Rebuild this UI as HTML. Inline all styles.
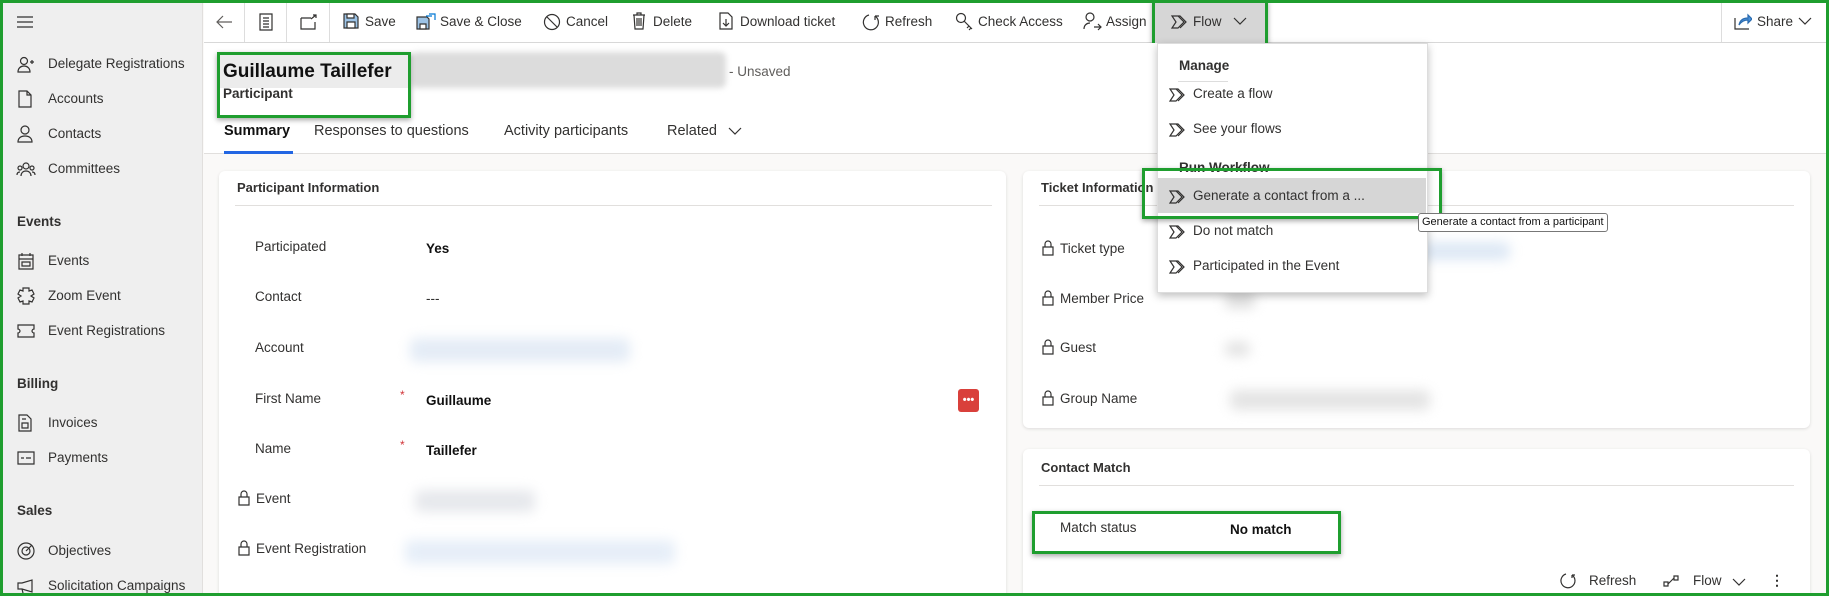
<!DOCTYPE html>
<html><head><meta charset="utf-8">
<style>
*{margin:0;padding:0;box-sizing:border-box}
html,body{width:1829px;height:596px;overflow:hidden}
body{position:relative;background:#faf9f8;font-family:"Liberation Sans",sans-serif;color:#323130;font-size:14px}
.a{position:absolute;white-space:nowrap;line-height:20px}
.c{font-size:13.5px}
svg.i{position:absolute;fill:none;stroke:#323130;stroke-width:1.2}
.gb{position:absolute;border:3px solid #1f9e2f;box-shadow:0 2px 5px rgba(0,0,0,.35)}
.blur{position:absolute;filter:blur(6px);border-radius:6px}
</style></head><body>
<!-- sidebar -->
<div style="position:absolute;left:0;top:0;width:203px;height:596px;background:#efefef;border-right:1px solid #e1dfdd"></div>
<svg class="i" style="left:16px;top:15px" width="18" height="14"><path d="M1 2h16M1 7h16M1 12h16"/></svg>
<svg class="i" style="left:17px;top:56px" width="18" height="18"><circle cx="7" cy="5" r="3.5"/><path d="M1 16c0-4 3-6 6-6s6 2 6 6zM13 6h4M15 4v4"/></svg>
<div class="a c" style="left:48px;top:54px">Delegate Registrations</div>
<svg class="i" style="left:18px;top:90px" width="14" height="18"><path d="M1 1h8l4 4v12H1zM9 1v4h4"/></svg>
<div class="a c" style="left:48px;top:89px">Accounts</div>
<svg class="i" style="left:17px;top:125px" width="16" height="18"><circle cx="8" cy="5" r="4"/><path d="M1 17c0-4 3-6 7-6s7 2 7 6z"/></svg>
<div class="a c" style="left:48px;top:124px">Contacts</div>
<svg class="i" style="left:16px;top:161px" width="20" height="16"><circle cx="10" cy="5" r="3"/><circle cx="4" cy="7" r="2"/><circle cx="16" cy="7" r="2"/><path d="M5 15c0-3 2-5 5-5s5 2 5 5M1 14c0-2 1-3 3-3M19 14c0-2-1-3-3-3"/></svg>
<div class="a c" style="left:48px;top:159px">Committees</div>
<div class="a c" style="left:17px;top:212px;font-weight:bold">Events</div>
<svg class="i" style="left:18px;top:252px" width="16" height="18"><path d="M1 3h14v14H1zM1 7h14M4 1v3M12 1v3M4 10h8v4H4z"/></svg>
<div class="a c" style="left:48px;top:251px">Events</div>
<svg class="i" style="left:17px;top:287px" width="18" height="18"><path d="M6 1h6v3l3-1 2 4-3 2 3 2-2 4-3-1v3H6v-3l-3 1-2-4 3-2-3-2 2-4 3 1z"/></svg>
<div class="a c" style="left:48px;top:286px">Zoom Event</div>
<svg class="i" style="left:17px;top:324px" width="18" height="14"><path d="M1 1h16v4c-1 0-2 1-2 2s1 2 2 2v4H1V9c1 0 2-1 2-2S2 5 1 5z"/></svg>
<div class="a c" style="left:48px;top:321px">Event Registrations</div>
<div class="a c" style="left:17px;top:374px;font-weight:bold">Billing</div>
<svg class="i" style="left:18px;top:414px" width="14" height="18"><path d="M1 1h8l4 4v12H1zM4 9h6v5H4zM4 5h4"/></svg>
<div class="a c" style="left:48px;top:413px">Invoices</div>
<svg class="i" style="left:17px;top:451px" width="18" height="14"><path d="M1 1h16v12H1zM4 7h3M9 7h5"/></svg>
<div class="a c" style="left:48px;top:448px">Payments</div>
<div class="a c" style="left:17px;top:501px;font-weight:bold">Sales</div>
<svg class="i" style="left:17px;top:542px" width="18" height="18"><circle cx="9" cy="9" r="8"/><circle cx="9" cy="9" r="4"/><path d="M9 9l6-6"/></svg>
<div class="a c" style="left:48px;top:541px">Objectives</div>
<svg class="i" style="left:17px;top:579px" width="18" height="14"><path d="M1 4h4l10-3v12L5 10H1zM5 10l1 4"/></svg>
<div class="a c" style="left:48px;top:576px">Solicitation Campaigns</div>

<!-- command bar -->
<div style="position:absolute;left:204px;top:0;width:1625px;height:43px;background:#fff;border-bottom:1px solid #d8d8d8"></div>
<div style="position:absolute;left:244px;top:3px;width:1px;height:39px;background:#ddd"></div>
<div style="position:absolute;left:286px;top:3px;width:1px;height:39px;background:#ddd"></div>
<div style="position:absolute;left:329px;top:3px;width:1px;height:39px;background:#ddd"></div>
<div style="position:absolute;left:1721px;top:3px;width:1px;height:39px;background:#ddd"></div>
<svg class="i" style="left:215px;top:14px;stroke:#605e5c" width="18" height="16"><path d="M17 8H2M8 2L2 8l6 6"/></svg>
<svg class="i" style="left:259px;top:13px" width="14" height="18"><path d="M1 1h12v16H1zM4 5h6M4 8h6M4 11h6M4 14h6"/></svg>
<svg class="i" style="left:300px;top:14px" width="18" height="16"><path d="M1 4h10M1 4v11h14V8M11 5l5-4M13 1h3v3"/></svg>
<svg class="i" style="left:343px;top:13px" width="16" height="16"><path d="M1 1h11l3 3v11H1z" fill="#9dc3e6"/><path d="M4 9h8v6H4zM4 1h7v4H4z" fill="#fff"/></svg>
<div class="a c" style="left:365px;top:12px">Save</div>
<svg class="i" style="left:416px;top:12px" width="20" height="18"><path d="M1 5h10l2 2v10H1z" fill="#9dc3e6"/><path d="M4 12h6v5H4z" fill="#fff"/><path d="M13 2h6v6M10 4h6" stroke="#0078d4"/></svg>
<div class="a c" style="left:440px;top:12px">Save &amp; Close</div>
<svg class="i" style="left:543px;top:13px" width="18" height="18"><circle cx="9" cy="9" r="7.5"/><path d="M4 4l10 10"/></svg>
<div class="a c" style="left:566px;top:12px">Cancel</div>
<svg class="i" style="left:632px;top:12px" width="14" height="18"><path d="M1 3h12M5 3V1h4v2M2 3l1 14h8l1-14M5 6v8M7 6v8M9 6v8"/></svg>
<div class="a c" style="left:653px;top:12px">Delete</div>
<svg class="i" style="left:719px;top:12px" width="14" height="18"><path d="M1 1h8l4 4v12H1zM7 7v6M4 11l3 3 3-3"/></svg>
<div class="a c" style="left:740px;top:12px">Download ticket</div>
<svg class="i" style="left:862px;top:13px" width="18" height="18"><path d="M7 2A7.5 7.5 0 1 0 13 3M13 3V7M13 3h4"/></svg>
<div class="a c" style="left:885px;top:12px">Refresh</div>
<svg class="i" style="left:955px;top:12px" width="20" height="20"><circle cx="6" cy="6" r="4.5"/><path d="M9 9l8 8M14 14l-2 2M16 16l-2 2"/></svg>
<div class="a c" style="left:978px;top:12px">Check Access</div>
<svg class="i" style="left:1083px;top:12px" width="20" height="20"><circle cx="7" cy="5" r="4"/><path d="M1 17c0-4 3-6 6-6M11 15h7M15 12l3 3-3 3"/></svg>
<div class="a c" style="left:1106px;top:12px">Assign</div>
<div style="position:absolute;left:1155px;top:3px;width:111px;height:42px;background:#d6d6d6"></div>
<svg class="i" style="left:1169px;top:14px" width="18" height="16"><path d="M3 2h6l6 6-6 6H3l4-6zM9 2h2l6 6-6 6"/></svg>
<div class="a c" style="left:1193px;top:12px">Flow</div>
<svg class="i" style="left:1233px;top:16px" width="14" height="10"><path d="M1 2l6 6 6-6"/></svg>
<div class="gb" style="left:1152px;top:0;width:116px;height:47px"></div>
<svg class="i" style="left:1734px;top:12px" width="18" height="18"><path d="M1 6v11h14"/><path d="M5 13c1-5 4-7 9-7V3l4 4-4 4V8c-4 0-7 2-9 5z" fill="#4a90d9" stroke="#2b6cb0"/></svg>
<div class="a c" style="left:1757px;top:12px">Share</div>
<svg class="i" style="left:1798px;top:16px" width="14" height="10"><path d="M1 2l6 6 6-6"/></svg>

<!-- header -->
<div style="position:absolute;left:204px;top:43px;width:1625px;height:111px;background:#fff;border-bottom:1px solid #e1dfdd"></div>
<div class="blur" style="left:411px;top:52px;width:315px;height:36px;background:#dcdcdc;filter:blur(3px)"></div>
<div style="position:absolute;left:217px;top:52px;width:194px;height:36px;background:#ececec"></div>
<div class="a" style="left:223px;top:58px;font-size:19px;line-height:28px;font-weight:bold;color:#111">Guillaume Taillefer</div>
<div class="a c" style="left:223px;top:84px;font-weight:bold">Participant</div>
<div class="gb" style="left:217px;top:52px;width:194px;height:66px"></div>
<div class="a c" style="left:729px;top:62px;color:#605e5c">- Unsaved</div>
<div class="a" style="left:224px;top:121px;font-size:14.5px;font-weight:bold;color:#111">Summary</div>
<div style="position:absolute;left:224px;top:151px;width:69px;height:3px;background:#2266e3"></div>
<div class="a" style="left:314px;top:121px;font-size:14.5px">Responses to questions</div>
<div class="a" style="left:504px;top:121px;font-size:14.5px">Activity participants</div>
<div class="a" style="left:667px;top:121px;font-size:14.5px">Related</div>
<svg class="i" style="left:728px;top:126px" width="14" height="10"><path d="M1 2l6 6 6-6"/></svg>

<!-- left card -->
<div style="position:absolute;left:219px;top:171px;width:787px;height:440px;background:#fff;border-radius:6px;box-shadow:0 1px 3px rgba(0,0,0,.12)"></div>
<div class="a" style="left:237px;top:178px;font-weight:bold;font-size:13px">Participant Information</div>
<div style="position:absolute;left:235px;top:205px;width:757px;height:1px;background:#e1dfdd"></div>
<div class="a c" style="left:255px;top:237px">Participated</div><div class="a c" style="left:426px;top:239px;font-weight:bold;color:#111">Yes</div>
<div class="a c" style="left:255px;top:287px">Contact</div><div class="a c" style="left:426px;top:289px">---</div>
<div class="a c" style="left:255px;top:338px">Account</div>
<div class="blur" style="left:410px;top:338px;width:220px;height:24px;background:#e4ecf6"></div>
<div class="a c" style="left:255px;top:389px">First Name</div><div class="a" style="left:400px;top:385px;color:#d13438;font-size:12px">*</div><div class="a c" style="left:426px;top:391px;font-weight:bold;color:#111">Guillaume</div>
<div style="position:absolute;left:958px;top:389px;width:21px;height:23px;background:#d9403b;border-radius:3px;color:#fff;font-size:11px;line-height:22px;text-align:center;font-weight:bold">•••</div>
<div class="a c" style="left:255px;top:439px">Name</div><div class="a" style="left:400px;top:435px;color:#d13438;font-size:12px">*</div><div class="a c" style="left:426px;top:441px;font-weight:bold;color:#111">Taillefer</div>
<svg class="i" style="left:238px;top:490px" width="12" height="16"><path d="M3 7V4a3 3 0 0 1 6 0v3M1 7h10v8H1z"/></svg>
<div class="a c" style="left:256px;top:489px">Event</div>
<div class="blur" style="left:415px;top:490px;width:120px;height:22px;background:#e6e8ec"></div>
<svg class="i" style="left:238px;top:540px" width="12" height="16"><path d="M3 7V4a3 3 0 0 1 6 0v3M1 7h10v8H1z"/></svg>
<div class="a c" style="left:256px;top:539px">Event Registration</div>
<div class="blur" style="left:405px;top:540px;width:270px;height:24px;background:#e6eef8"></div>

<!-- right card -->
<div style="position:absolute;left:1023px;top:171px;width:787px;height:257px;background:#fff;border-radius:6px;box-shadow:0 1px 3px rgba(0,0,0,.12)"></div>
<div class="a" style="left:1041px;top:178px;font-weight:bold;font-size:13px">Ticket Information</div>
<div style="position:absolute;left:1039px;top:205px;width:755px;height:1px;background:#e1dfdd"></div>
<svg class="i" style="left:1042px;top:240px" width="12" height="16"><path d="M3 7V4a3 3 0 0 1 6 0v3M1 7h10v8H1z"/></svg>
<div class="a c" style="left:1060px;top:239px">Ticket type</div>
<div class="blur" style="left:1420px;top:242px;width:90px;height:18px;background:#dde8f5"></div>
<svg class="i" style="left:1042px;top:290px" width="12" height="16"><path d="M3 7V4a3 3 0 0 1 6 0v3M1 7h10v8H1z"/></svg>
<div class="a c" style="left:1060px;top:289px">Member Price</div>
<div class="blur" style="left:1225px;top:292px;width:30px;height:16px;background:#ddd"></div>
<svg class="i" style="left:1042px;top:339px" width="12" height="16"><path d="M3 7V4a3 3 0 0 1 6 0v3M1 7h10v8H1z"/></svg>
<div class="a c" style="left:1060px;top:338px">Guest</div>
<div class="blur" style="left:1225px;top:342px;width:25px;height:14px;background:#e2e2e2"></div>
<svg class="i" style="left:1042px;top:390px" width="12" height="16"><path d="M3 7V4a3 3 0 0 1 6 0v3M1 7h10v8H1z"/></svg>
<div class="a c" style="left:1060px;top:389px">Group Name</div>
<div class="blur" style="left:1230px;top:390px;width:200px;height:20px;background:#e4e4e4"></div>

<!-- contact match -->
<div style="position:absolute;left:1023px;top:449px;width:787px;height:160px;background:#fff;border-radius:6px;box-shadow:0 1px 3px rgba(0,0,0,.12)"></div>
<div class="a" style="left:1041px;top:458px;font-weight:bold;font-size:13px">Contact Match</div>
<div style="position:absolute;left:1039px;top:485px;width:755px;height:1px;background:#e1dfdd"></div>
<div class="gb" style="left:1032px;top:511px;width:309px;height:43px"></div>
<div class="a c" style="left:1060px;top:518px">Match status</div>
<div class="a c" style="left:1230px;top:520px;font-weight:bold;color:#111">No match</div>
<svg class="i" style="left:1560px;top:572px" width="16" height="18"><path d="M6 2A7 7 0 1 0 12 3M12 3V6M12 3h3"/></svg>
<div class="a c" style="left:1589px;top:571px">Refresh</div>
<svg class="i" style="left:1663px;top:574px" width="16" height="14"><path d="M1 8h4v4H1zM11 2h4v4h-4zM5 10l6-6"/></svg>
<div class="a c" style="left:1693px;top:571px">Flow</div>
<svg class="i" style="left:1732px;top:577px" width="14" height="10"><path d="M1 2l6 6 6-6"/></svg>
<div class="a" style="left:1770px;top:570px;font-weight:bold">⋮</div>

<!-- dropdown -->
<div style="position:absolute;left:1157px;top:43px;width:271px;height:250px;background:#fff;box-shadow:0 3px 8px rgba(0,0,0,.25);border:1px solid #ddd"></div>
<div class="a c" style="left:1179px;top:56px;font-weight:bold">Manage</div>
<div style="position:absolute;left:1178px;top:81px;width:50px;height:1px;background:#ddd"></div>
<svg class="i" style="left:1167px;top:87px" width="18" height="16"><path d="M3 2h6l6 6-6 6H3l4-6zM9 2h2l6 6-6 6"/></svg>
<div class="a c" style="left:1193px;top:84px">Create a flow</div>
<svg class="i" style="left:1167px;top:122px" width="18" height="16"><path d="M3 2h6l6 6-6 6H3l4-6zM9 2h2l6 6-6 6"/></svg>
<div class="a c" style="left:1193px;top:119px">See your flows</div>
<div class="a c" style="left:1179px;top:158px;font-weight:bold">Run Workflow</div>
<div style="position:absolute;left:1158px;top:178px;width:268px;height:35px;background:#d6d6d6"></div>
<svg class="i" style="left:1167px;top:189px" width="18" height="16"><path d="M3 2h6l6 6-6 6H3l4-6zM9 2h2l6 6-6 6"/></svg>
<div class="a c" style="left:1193px;top:186px">Generate a contact from a ...</div>
<svg class="i" style="left:1167px;top:224px" width="18" height="16"><path d="M3 2h6l6 6-6 6H3l4-6zM9 2h2l6 6-6 6"/></svg>
<div class="a c" style="left:1193px;top:221px">Do not match</div>
<svg class="i" style="left:1167px;top:259px" width="18" height="16"><path d="M3 2h6l6 6-6 6H3l4-6zM9 2h2l6 6-6 6"/></svg>
<div class="a c" style="left:1193px;top:256px">Participated in the Event</div>
<div class="gb" style="left:1142px;top:168px;width:300px;height:51px"></div>
<div class="a" style="left:1418px;top:213px;height:19px;line-height:17px;padding:0 3px;border:1px solid #777;border-radius:3px;background:#fff;font-size:11px;color:#111">Generate a contact from a participant</div>

<!-- outer border -->
<div style="position:absolute;left:0;top:0;width:1829px;height:596px;border:3px solid #1f9e2f"></div>
</body></html>
